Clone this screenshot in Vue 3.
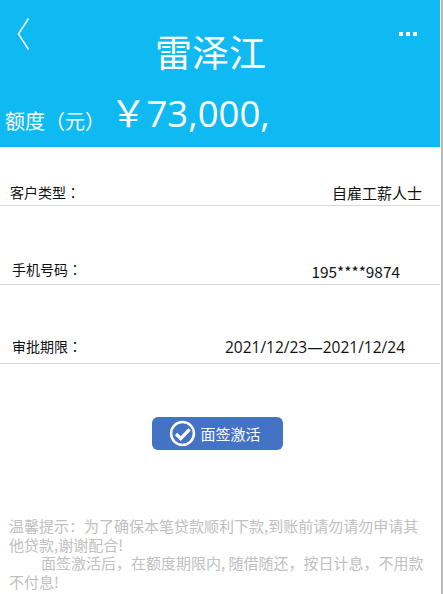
<script setup>
const rows = [
  { label: '客户类型', value: '自雇工薪人士', cls: 'r1' },
  { label: '手机号码', value: '195****9874', cls: 'r2' },
  { label: '审批期限', value: '2021/12/23—2021/12/24', cls: 'r3' }
]
</script>

<template>
  <div class="page">
    <div class="inner">
      <header class="head">
        <div class="top">
          <svg class="back" width="16" height="34" viewBox="0 0 16 34"><path d="M12.5 1.500 L2.500 17 L12.500 32.500" fill="none" stroke="#fff" stroke-width="1.500"/></svg>
          <h1 class="name">雷泽江</h1>
          <div class="dots"><i></i><i></i><i></i></div>
        </div>
        <div class="limit">
          <span class="lab">额度（元）</span>
          <span class="amt">￥73,000,</span>
        </div>
      </header>
      <section class="list">
        <div v-for="r in rows" :key="r.label" class="row" :class="r.cls">
          <span class="k">{{ r.label }}<span class="colon">：</span></span>
          <span class="v">{{ r.value }}</span>
        </div>
      </section>
      <div class="btnwrap">
        <button class="btn">
          <svg width="27" height="27" viewBox="0 0 26 26"><circle cx="13" cy="13" r="11" fill="none" stroke="#fff" stroke-width="2.400"/><path d="M6.800 13.500 L11.300 18 L19.800 9" fill="none" stroke="#fff" stroke-width="3.200"/></svg>
          <span>面签激活</span>
        </button>
      </div>
      <div class="tip">
        <p>温馨提示：为了确保本笔贷款顺利下款,到账前请勿请勿申请其他贷款,谢谢配合!</p>
        <p class="ind">面签激活后，在额度期限内, 随借随还，按日计息，不用款不付息!</p>
      </div>
    </div>
  </div>
</template>

<style scoped>
.page {
  width: 441px;
  height: 594px;
  overflow: hidden;
  background: #fff;
  border-right: 2px solid #b8b8b8;
  font-family: "Noto Sans CJK SC", "Open Sans", sans-serif;
}
.inner {
  width: 440px;
}
.head {
  height: 147px;
  background: #0fbaf2;
  color: #fff;
  box-sizing: border-box;
  overflow: hidden;
}
.top {
  display: flex;
  justify-content: space-between;
  align-items: flex-start;
  height: 92px;
  padding: 17px 23px 0 16px;
  box-sizing: border-box;
}
.name {
  margin: 12px 0 0 -10px;
  font-size: 37px;
  line-height: 44px;
  font-weight: 400;
}
.dots {
  display: flex;
  gap: 3px;
  margin-top: 15px;
}
.dots i {
  width: 4px;
  height: 4px;
  background: #fff;
}
.limit {
  display: flex;
  align-items: baseline;
  padding-left: 5px;
  line-height: 46px;
  margin-top: -2px;
}
.lab {
  font-size: 20px;
  width: 105px;
  white-space: nowrap;
  position: relative;
  top: 2px;
}
.amt {
  font-family: "Open Sans", "Noto Sans CJK SC", sans-serif;
  font-size: 36.500px;
}
.list {
  color: #111;
}
.row {
  display: flex;
  justify-content: space-between;
  border-bottom: 1px solid #d8d8d8;
  box-sizing: border-box;
  font-size: 14px;
}
.colon {
  font-family: "Noto Sans CJK JP", sans-serif;
}
.v {
  font-family: "Open Sans", "Noto Sans CJK SC", sans-serif;
  font-size: 15.500px;
}
.r1 .v {
  font-family: "Noto Sans CJK SC", sans-serif;
  font-size: 15px;
}
.r1 {
  height: 59px;
  padding: 35px 18px 0 10px;
}
.r2 {
  height: 79px;
  padding: 53px 40px 0 12px;
}
.r2 .v {
  font-family: "Noto Sans CJK SC", sans-serif;
  font-size: 15.400px;
  margin-top: 1px;
}
.r3 {
  height: 79px;
  padding: 51px 35px 0 12px;
}
.btnwrap {
  display: flex;
  justify-content: center;
  padding-top: 53px;
  padding-right: 5px;
}
.btn {
  display: flex;
  align-items: center;
  justify-content: center;
  gap: 4px;
  width: 131px;
  height: 33px;
  padding: 0 5px 0 0;
  background: #4472c4;
  border: 0;
  border-radius: 6px;
  color: #fff;
  font: inherit;
  font-size: 15px;
}
.tip {
  margin-top: 67px;
  padding: 0 15px 0 9px;
  color: #c0c0c0;
  font-size: 15px;
  line-height: 18.500px;
}
.tip p {
  margin: 0;
}
.ind {
  text-indent: 32px;
}
</style>
